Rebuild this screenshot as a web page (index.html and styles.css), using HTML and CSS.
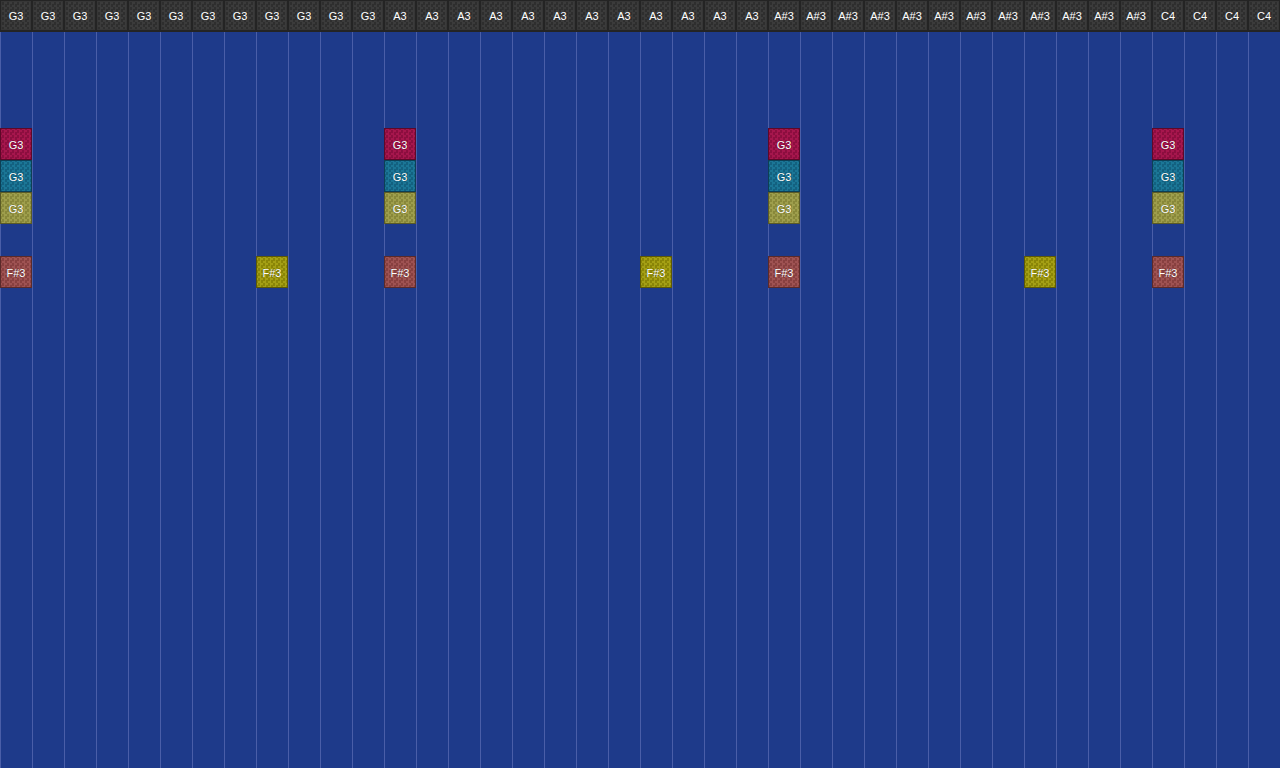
FILE: index.html
```html
<!DOCTYPE html>
<html lang="en">
<head>
    <meta charset="UTF-8">
    <title>Pattern</title>
    <link rel="stylesheet" href="styles.css">
</head>
<body>
    <div class="roll" id="roll"></div>

    <script>
        const roll = document.getElementById('roll');

        // column headers: which note each step plays
        const heads = [];
        for (let i = 0; i < 40; i++) {
            if (i < 12) heads.push('G3');
            else if (i < 24) heads.push('A3');
            else if (i < 36) heads.push('A#3');
            else heads.push('C4');
        }

        // row -> { column: [colour, label] }
        const notes = {
            3: { 0: ['red', 'G3'], 12: ['red', 'G3'], 24: ['red', 'G3'], 36: ['red', 'G3'] },
            4: { 0: ['teal', 'G3'], 12: ['teal', 'G3'], 24: ['teal', 'G3'], 36: ['teal', 'G3'] },
            5: { 0: ['olive', 'G3'], 12: ['olive', 'G3'], 24: ['olive', 'G3'], 36: ['olive', 'G3'] },
            7: {
                0: ['rust', 'F#3'], 8: ['yellow', 'F#3'], 12: ['rust', 'F#3'], 20: ['yellow', 'F#3'],
                24: ['rust', 'F#3'], 32: ['yellow', 'F#3'], 36: ['rust', 'F#3']
            }
        };

        heads.forEach(function (name) {
            const h = document.createElement('div');
            h.className = 'head';
            h.textContent = name;
            roll.appendChild(h);
        });

        for (let r = 0; r < 23; r++) {
            for (let c = 0; c < 40; c++) {
                const cell = document.createElement('div');
                cell.className = 'cell';
                const n = notes[r] && notes[r][c];
                if (n) {
                    const note = document.createElement('div');
                    note.className = 'note ' + n[0];
                    note.textContent = n[1];
                    cell.appendChild(note);
                }
                roll.appendChild(cell);
            }
        }
    </script>
</body>
</html>
```

FILE: styles.css
```css
body {
    margin: 0;
    background: #1e3a8a;
    font-family: "Liberation Sans", Arial, sans-serif;
    overflow: hidden;
}

.roll {
    display: grid;
    grid-template-columns: repeat(40, 32px);
    grid-auto-rows: 32px;
    width: 1280px;
    height: 768px;
}

/* step headers */
.head {
    box-sizing: border-box;
    border: 1px solid #242424;
    border-bottom-width: 2px;
    padding-top: 1px;
    background: repeating-conic-gradient(#3b3b3b 0 25%, #2e2e2e 0 50%) 1px 1px / 5px 5px;
    color: #fff;
    font-size: 11px;
    display: flex;
    align-items: center;
    justify-content: center;
    box-shadow: inset 0 0 0 1px #363636;
}

.cell {
    box-sizing: border-box;
    border-left: 1px solid #4a5ea8;
}

.note {
    box-sizing: border-box;
    height: 32px;
    width: 32px;
    margin-left: -1px;
    border: 1px solid;
    padding-top: 1px;
    color: #fff;
    font-size: 11px;
    display: flex;
    align-items: center;
    justify-content: center;
    text-shadow: 0 0 1px rgba(0, 0, 0, .5);
}

.red {
    border-color: #5e0828;
    background: repeating-conic-gradient(#a6164d 0 25%, #8c0e3f 0 50%) 1px 1px / 5px 5px;
}
.teal {
    border-color: #0d3f55;
    background: repeating-conic-gradient(#1b7696 0 25%, #136180 0 50%) 1px 1px / 5px 5px;
}
.olive {
    border-color: #5a5a26;
    background: repeating-conic-gradient(#9e9e4c 0 25%, #88883a 0 50%) 1px 1px / 5px 5px;
}
.yellow {
    border-color: #5c5806;
    background: repeating-conic-gradient(#a49f14 0 25%, #8a8507 0 50%) 1px 1px / 5px 5px;
}
.rust {
    border-color: #5a2a2a;
    background: repeating-conic-gradient(#9e5252 0 25%, #884040 0 50%) 1px 1px / 5px 5px;
}
```
